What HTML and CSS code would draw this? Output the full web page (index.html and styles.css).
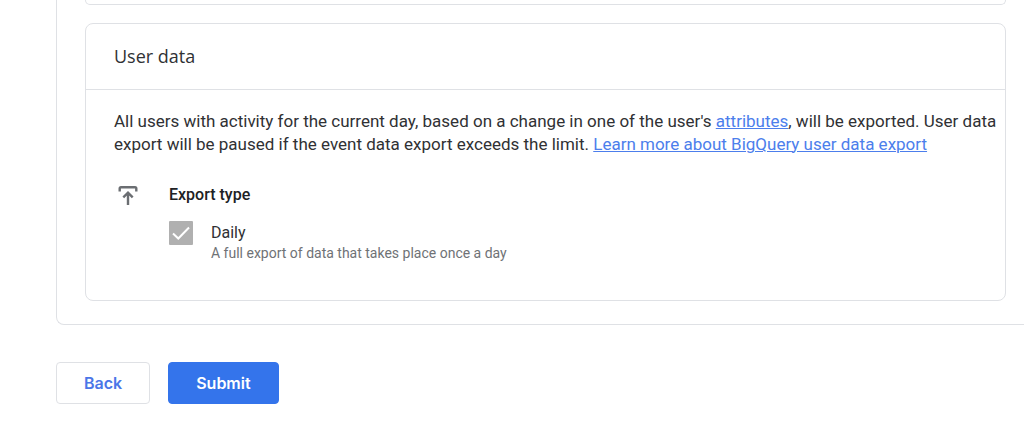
FILE: index.html
```html
<!DOCTYPE html>
<html lang="en">
<head>
<meta charset="utf-8">
<meta name="viewport" content="width=device-width, initial-scale=1">
<title>User data export</title>
<link rel="stylesheet" href="styles.css">
</head>
<body>
<main class="page">
  <div class="panel">
    <section class="card card-previous" aria-hidden="true"></section>
    <section class="card">
      <h2 class="card-title">User data</h2>
      <div class="card-body">
        <p class="description">All users with activity for the current day, based on a change in one of the user's <a href="#attributes">attributes</a>, will be exported. User data export will be paused if the event data export exceeds the limit. <a href="#learn">Learn more about BigQuery user data export</a></p>
        <div class="export">
          <svg class="export-icon" viewBox="0 0 28 28" aria-hidden="true"><path d="M5.700 7.500V4.500Q5.700 3.200 7 3.200H21Q22.300 3.200 22.300 4.500V7.500M14 21V9M9.300 13.400L14 8.700L18.700 13.400" fill="none" stroke="#6b6e72" stroke-width="2.400"/></svg>
          <div class="export-options">
            <h3 class="export-title">Export type</h3>
            <div class="option">
              <span class="checkbox-box">
                <input class="checkbox" type="checkbox" id="daily" checked disabled>
                <svg class="checkmark" viewBox="0 0 24 24" aria-hidden="true"><path d="M4 12.500L9.300 17.500L20 6.500" fill="none" stroke="#fff" stroke-width="2"/></svg>
              </span>
              <label class="option-text" for="daily"><span class="option-name">Daily</span><span class="option-hint">A full export of data that takes place once a day</span></label>
            </div>
          </div>
        </div>
      </div>
    </section>
  </div>
  <div class="actions">
    <button class="button" type="button">Back</button>
    <button class="button button-primary" type="submit">Submit</button>
  </div>
</main>
</body>
</html>
```
FILE: styles.css
```css
* { box-sizing: border-box; }
body { margin: 0; background: #fff; color: #303134; font-family: Roboto, sans-serif; overflow-x: hidden; }
h2, h3, p { margin: 0; }
.page { padding-left: 56px; }
.panel { padding: 0 18px 23px 28px; border: 1px solid #dfe1e5; border-width: 0 0 1px 1px; border-radius: 0 0 0 8px; }
.card { border: 1px solid #dfe1e5; border-radius: 8px; }
.card-previous { height: 5px; margin-bottom: 18px; border-top: 0; border-radius: 0 0 8px 8px; }
.card-title { padding: 20px 28px; border-bottom: 1px solid #dfe1e5; font: 400 18px/25px "Open Sans", sans-serif; }
.card-body { padding: 20px 8px 38px 28px; }
.description { font-size: 17px; line-height: 23px; }
.description a { color: #4c7eec; text-decoration-thickness: 1px; }
.export { display: flex; gap: 27px; margin-top: 28px; }
.export-icon { width: 28px; height: 28px; flex: none; }
.export-title { color: #202124; font-size: 16px; font-weight: 500; line-height: 22px; }
.option { display: flex; gap: 18px; margin-top: 15px; }
.checkbox-box { display: grid; width: 24px; height: 24px; flex: none; }
.checkbox, .checkmark { grid-area: 1 / 1; width: 24px; height: 24px; }
.checkbox { appearance: none; margin: 0; border-radius: 1px; background: #b0b0b0; }
.checkmark { z-index: 1; pointer-events: none; }
.option-text { display: flex; flex-direction: column; }
.option-name { font-size: 16px; line-height: 23px; }
.option-hint { color: #6f7276; font-size: 14px; line-height: 18px; }
.actions { display: flex; gap: 18px; margin-top: 37px; }
.button { height: 42px; padding: 0 27px; border: 1px solid #dfe1e5; border-radius: 4px; background: #fff; color: #4b76e8; font: 600 16px/24px Inter, sans-serif; }
.button-primary { border-color: #3474eb; background: #3474eb; color: #fff; }
```
